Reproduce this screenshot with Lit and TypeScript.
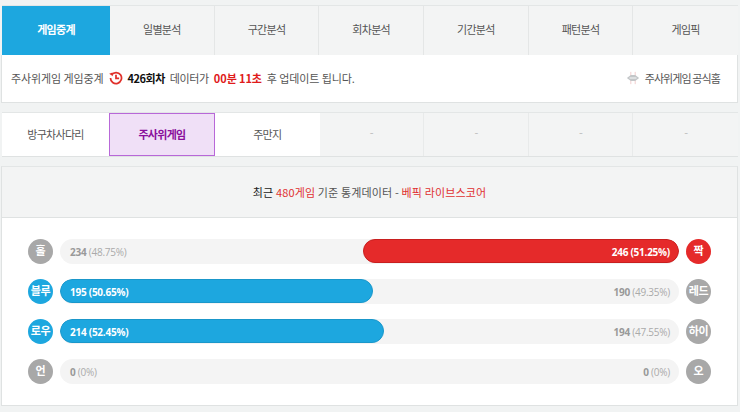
import { LitElement, html, css, svg } from "lit";
import { customElement } from "lit/decorators.js";

const TOP = ["게임중계", "일별분석", "구간분석", "회차분석", "기간분석", "패턴분석", "게임픽"];
const SUB = ["방구차사다리", "주사위게임", "주만지", "-", "-", "-", "-"];
const ROWS = [
  { l: "홀", r: "짝", a: 234, ap: "48.75", b: 246, bp: "51.25", w: 0, rw: 51.1, on: "right" },
  { l: "블루", r: "레드", a: 195, ap: "50.65", b: 190, bp: "49.35", w: 50.5, rw: 0, on: "left" },
  { l: "로우", r: "하이", a: 214, ap: "52.45", b: 194, bp: "47.55", w: 52.3, rw: 0, on: "left" },
  { l: "언", r: "오", a: 0, ap: "0", b: 0, bp: "0", w: 0, rw: 0, on: "" },
];

const clock = svg`<svg class="ico" viewBox="0 0 16 16" width="14" height="14" fill="none" stroke="#e0312b" stroke-width="2">
  <path d="M3 4.2A6.3 6.3 0 1 1 1.7 8"/><path d="M0.2 3.2 L4 1.6 L4.4 6 Z" fill="#e0312b" stroke="none"/><path d="M8 4.4V8.4H11.6"/></svg>`;
const dice = svg`<svg class="ico" viewBox="0 0 16 16" width="14" height="14" fill="none">
  <path d="M5.5 1V15M10.5 1V15" stroke="#f0c8c8" stroke-width="1"/>
  <path d="M1 8L5.5 4.5H10.5L15 8L10.5 11.5H5.5Z" fill="#c3c6c8"/><path d="M4 8H12" stroke="#fff" stroke-width="1"/></svg>`;

@customElement("app-root")
export class AppRoot extends LitElement {
  static styles = css`
    :host { display: block; width: 740px; height: 412px; overflow: hidden; background: #f1f3f3;
      font-family: "Noto Sans CJK KR", "Noto Sans", sans-serif; font-size: 11px; color: #555; }
    .page { padding: 5px 2px 0 2px; display: flex; flex-direction: column; }
    .tabs { display: grid; grid-template-columns: 108px repeat(6, 1fr); height: 50px; background: #f3f4f4;
      border-top: 1px solid #e3e6e6; box-sizing: border-box; letter-spacing: -0.7px; }
    .tab { display: flex; align-items: center; justify-content: center; border-right: 1px solid #e4e6e6; padding-bottom: 3px; }
    .tab:last-child { border-right: none; }
    .tab.on { background: #1da7df; color: #fff; font-weight: 700; border-right: none; }
    .info { height: 48px; box-sizing: border-box; background: #fff; border: 1px solid #dfe2e2; border-top: none;
      display: flex; align-items: center; justify-content: space-between; padding: 0 17px 1px 9px; margin-left: -1px; }
    .left, .right { display: flex; align-items: center; gap: 5px; white-space: pre; letter-spacing: -0.1px; }
    .left b { letter-spacing: -0.5px; }
    .left .tight { letter-spacing: -0.35px; }
    .right { letter-spacing: -0.9px; }
    .ico { flex: none; }
    b { font-weight: 700; color: #111; }
    .red { color: #e01b1b; font-weight: 700; }
    .sub { display: grid; grid-template-columns: 107px 106px repeat(5, 1fr); height: 45px; margin-top: 9px; background: #f3f4f4;
      border-top: 1px solid #e3e6e6; border-bottom: 1px solid #dfe2e2; box-sizing: border-box; letter-spacing: -0.7px; }
    .stab { display: flex; align-items: center; justify-content: center; background: #f3f4f4; border-right: 1px solid #e8eaea; color: #bbb; padding-bottom: 5px; }
    .stab:last-child { border-right: none; }
    .stab.w { background: #fff; color: #555; border-right: none; padding-bottom: 2px; }
    .stab.sel { background: #f0e0f7; color: #8a0f9c; font-weight: 700; outline: 1px solid #b868d8; outline-offset: -1px; }
    .panel { margin-top: 9px; margin-left: -1px; height: 240px; box-sizing: border-box; background: #fff; border: 1px solid #dfe2e2; border-top-color: #e3e6e6; display: flex; flex-direction: column; }
    .head { height: 51px; flex: none; box-sizing: border-box; background: #f3f4f4; border-bottom: 1px solid #dfe2e2;
      display: flex; align-items: center; justify-content: center; white-space: pre; color: #555; letter-spacing: 0.15px; }
    .head .k { color: #222; }
    .head .c { color: #e03131; }
    .rows { padding: 21px 26px 0 26px; display: flex; flex-direction: column; gap: 15px; }
    .row { display: flex; align-items: center; gap: 7px; height: 25px; }
    .dot { width: 25px; height: 25px; flex: none; border-radius: 50%; background: #a8a8a8; color: #fff; font-weight: 700; font-size: 11px;
      display: flex; align-items: center; justify-content: center; padding-bottom: 3px; box-sizing: border-box; letter-spacing: -0.3px; }
    .dot.blue { background: #1da7df; }
    .dot.redd { background: #e52a2a; }
    .bar { position: relative; flex: 1; height: 25px; border-radius: 12.5px; background: #f4f4f4; overflow: hidden; }
    .fill { position: absolute; top: 0; bottom: 1px; border-radius: 12px; box-sizing: border-box; }
    .fill.l { left: 0; background: #1da7df; border: 1px solid #1a97ca; }
    .fill.r { right: 0; background: #e52a2a; border: 1px solid #c81f1f; }
    .txt { position: absolute; inset: 0; display: flex; align-items: center; justify-content: space-between; padding: 0 9px 0 10px; font-size: 10px; letter-spacing: -0.25px; font-family: "Open Sans", "Noto Sans", sans-serif; color: #aaa; }
    .txt b { color: #999; }
    .txt .hi, .txt .hi b { color: #fff; font-weight: 700; }
  `;

  render() {
    return html`<div class="page">
      <div class="tabs">${TOP.map((t, i) => html`<div class="tab ${i === 0 ? "on" : ""}">${t}</div>`)}</div>
      <div class="info">
        <div class="left"><span>주사위게임 게임중계</span>${clock}<b>426회차</b><span class="tight">데이터가</span><span class="red">00분 11초</span><span>후 업데이트 됩니다.</span></div>
        <div class="right">${dice}<span>주사위게임 공식홈</span></div>
      </div>
      <div class="sub">${SUB.map((t, i) => html`<div class="stab ${i < 3 ? "w" : ""} ${i === 1 ? "sel" : ""}">${t}</div>`)}</div>
      <div class="panel">
        <div class="head"><span class="k">최근 </span><span class="c">480게임</span><span> 기준 통계데이터 - </span><span class="c">베픽 라이브스코어</span></div>
        <div class="rows">
          ${ROWS.map((r) => html`<div class="row">
            <div class="dot ${r.on === "left" ? "blue" : ""}">${r.l}</div>
            <div class="bar">
              ${r.w ? html`<div class="fill l" style="width:${r.w}%"></div>` : ""}
              ${r.rw ? html`<div class="fill r" style="width:${r.rw}%"></div>` : ""}
              <div class="txt">
                <span class="${r.on === "left" ? "hi" : ""}"><b>${r.a}</b> (${r.ap}%)</span>
                <span class="${r.on === "right" ? "hi" : ""}"><b>${r.b}</b> (${r.bp}%)</span>
              </div>
            </div>
            <div class="dot ${r.on === "right" ? "redd" : ""}">${r.r}</div>
          </div>`)}
        </div>
      </div>
    </div>`;
  }
}
